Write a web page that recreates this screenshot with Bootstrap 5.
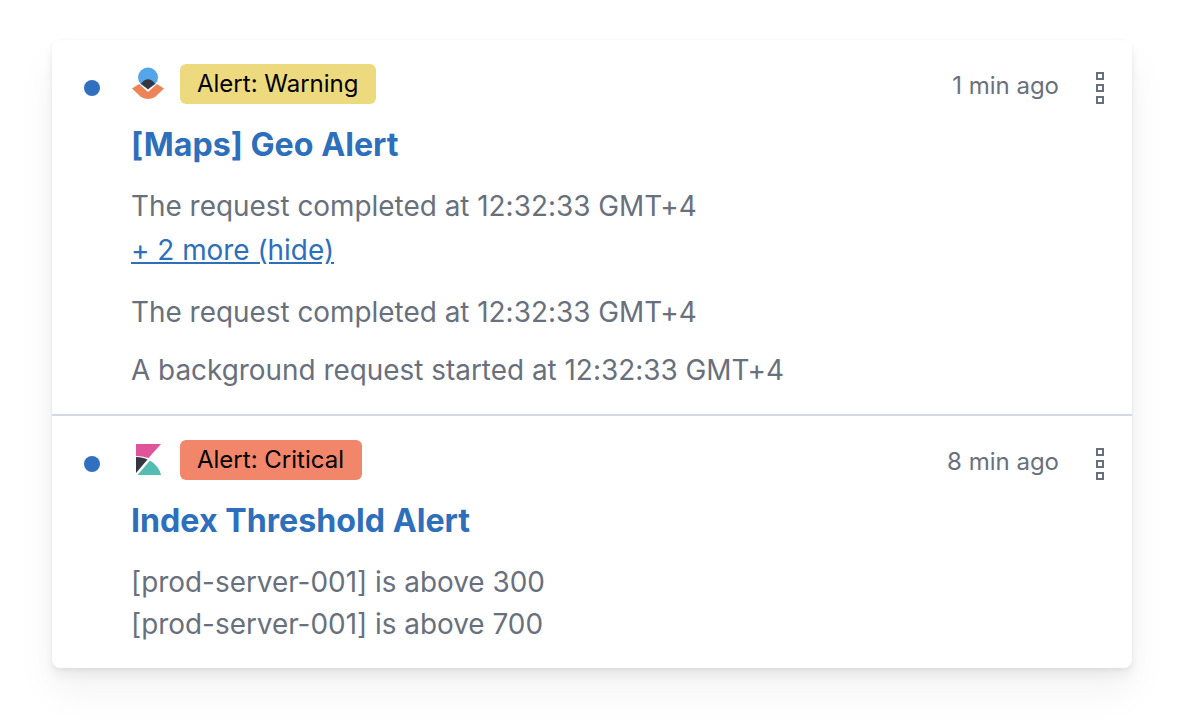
<!DOCTYPE html>
<html lang="en">
<head>
    <meta charset="UTF-8">
    <title>Alerts</title>
    <link href="https://cdn.jsdelivr.net/npm/bootstrap@5.3.0/dist/css/bootstrap.min.css" rel="stylesheet">
    <style>
        body { background: #fff; font-family: Inter, "Liberation Sans", sans-serif; font-feature-settings: "calt" 0; padding: 40px 48px 0 52px; height: 724px; overflow: hidden; }
        .feed-card { border: 0; border-radius: 8px; box-shadow: 0 1.8px 4px rgba(0,0,0,.06), 0 8px 12px rgba(0,0,0,.05), 0 23px 40px rgba(0,0,0,.05); height: 628px; }
        .feed-item { padding: 24px 28px 24px 32px; }
        .feed-item + .feed-item { border-top: 2px solid #d3dae6; }
        .first-item { height: 374px; }
        .unread-dot { width: 16px; height: 16px; background: #3170bf; border-radius: 50%; flex: none; margin-top: 16px; margin-right: 31px; }
        .alert-pill { font-size: 24px; line-height: 40px; height: 40px; padding: 0 17px; border-radius: 6px; color: #000; }
        .pill-warning { background: #eeda7e; }
        .pill-critical { background: #f2866b; padding-right: 18px; }
        .brand-icon { width: 36px; height: 40px; margin-left: 1px; margin-right: 12px; flex: none; }
        .time-ago { font-size: 24px; color: #69707d; line-height: 44px; }
        .more-btn { width: 8px; margin-left: 37px; padding-top: 8px; }
        .more-btn span { display: block; width: 8px; height: 8px; border: 2px solid #69707d; margin-bottom: 4px; }
        .feed-title { font-size: 32.2px; font-weight: 700; color: #2e6fbb; line-height: 40px; margin: 17px 0 0; }
        .feed-text { font-size: 27.9px; color: #69707d; line-height: 42px; margin: 0; }
        .text-after-title { margin-top: 20px; }
        .text-after-more { margin-top: 20px; }
        .text-spaced { margin-top: 16px; }
        .more-row { margin-top: 2px; }
        .more-link { color: #2e6fbb; text-decoration: underline; }
    </style>
</head>
<body>
    <div class="card feed-card">
        <div class="feed-item first-item d-flex">
            <div class="unread-dot"></div>
            <div class="flex-grow-1">
                <div class="d-flex align-items-start">
                    <svg class="brand-icon" viewBox="0 0 36 40">
                        <circle cx="16" cy="13.500" r="10" fill="#54a5ea"/>
                        <path d="M9 19.500Q16 11 23 19.500L16 25.500z" fill="#343741"/>
                        <path d="M0 24.500L7 20l9 8 9-8 7 4.500-9 8.500q-7 4-14 0z" fill="#ec8458"/>
                    </svg>
                    <span class="alert-pill pill-warning">Alert: Warning</span>
                    <span class="time-ago ms-auto">1 min ago</span>
                    <div class="more-btn"><span></span><span></span><span></span></div>
                </div>
                <h5 class="feed-title">[Maps] Geo Alert</h5>
                <p class="feed-text text-after-title">The request completed at 12:32:33 GMT+4</p>
                <p class="feed-text more-row"><a href="#" class="more-link">+ 2 more (hide)</a></p>
                <p class="feed-text text-after-more">The request completed at 12:32:33 GMT+4</p>
                <p class="feed-text text-spaced">A background request started at 12:32:33 GMT+4</p>
            </div>
        </div>
        <div class="feed-item d-flex">
            <div class="unread-dot"></div>
            <div class="flex-grow-1">
                <div class="d-flex align-items-start">
                    <svg class="brand-icon" viewBox="0 0 36 40">
                        <path d="M4 4H29L16.500 18Q10 16 4 16z" fill="#e0559a"/>
                        <path d="M4 17Q11 17 15.500 19.500L4 33z" fill="#343741"/>
                        <path d="M5.500 35L18 20.500Q27 26 29 35z" fill="#54bdb2"/>
                    </svg>
                    <span class="alert-pill pill-critical">Alert: Critical</span>
                    <span class="time-ago ms-auto">8 min ago</span>
                    <div class="more-btn"><span></span><span></span><span></span></div>
                </div>
                <h5 class="feed-title">Index Threshold Alert</h5>
                <p class="feed-text text-after-title">[prod-server-001] is above 300</p>
                <p class="feed-text">[prod-server-001] is above 700</p>
            </div>
        </div>
    </div>
    <script src="https://cdn.jsdelivr.net/npm/bootstrap@5.3.0/dist/js/bootstrap.bundle.min.js"></script>
</body>
</html>
